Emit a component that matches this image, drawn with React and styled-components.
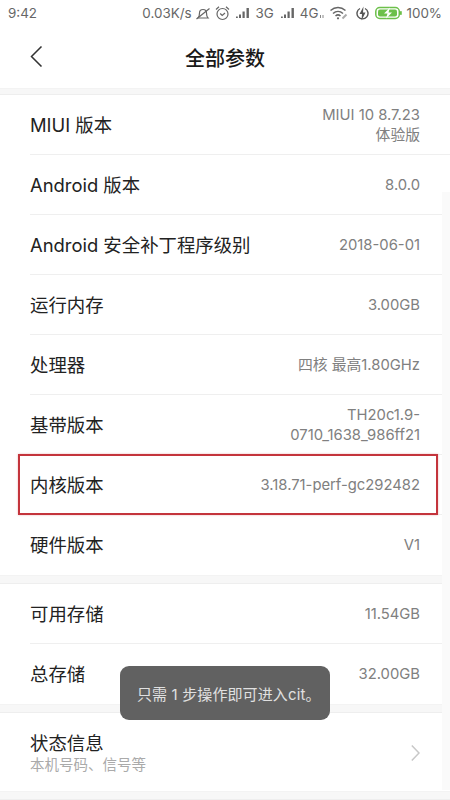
import React from "react";
import styled, { createGlobalStyle } from "styled-components";

const GlobalStyle = createGlobalStyle`
  html, body {
    margin: 0;
    padding: 0;
    background: #fff;
  }
  * {
    box-sizing: border-box;
  }
`;

const FONT = `"Inter", "Noto Sans CJK SC", sans-serif`;

const Page = styled.div`
  position: relative;
  width: 450px;
  height: 800px;
  overflow: hidden;
  background: #fff;
  font-family: ${FONT};
  display: flex;
  flex-direction: column;
`;

const StatusBar = styled.div`
  height: 26px;
  padding: 0 8px 0 8px;
  display: flex;
  align-items: center;
  justify-content: space-between;
  font-size: 13.4px;
  color: #666;
`;

const StatusRight = styled.div`
  display: flex;
  align-items: center;
`;

const Slot = styled.span`
  display: flex;
  align-items: center;
  margin-left: ${(p) => p.$ml || 0}px;
`;

const Header = styled.div`
  position: relative;
  height: 62px;
  display: flex;
  align-items: center;
  justify-content: center;
`;

const BackButton = styled.div`
  position: absolute;
  left: 30px;
  top: 20px;
  display: flex;
`;

const Title = styled.div`
  font-size: 20px;
  font-weight: 500;
  color: #1a1a1a;
`;

const Gap = styled.div`
  height: ${(p) => p.$h || 9}px;
  background: #f7f7f7;
  border-top: 1px solid #f3f3f3;
  border-bottom: 1px solid #eee;
  flex-shrink: 0;
`;

const Section = styled.div`
  display: flex;
  flex-direction: column;
`;

const Row = styled.div`
  height: ${(p) => p.$h || 60}px;
  margin-left: 30px;
  padding-right: 30px;
  padding-top: ${(p) => p.$pt || 0}px;
  display: flex;
  align-items: center;
  justify-content: space-between;
  border-bottom: ${(p) => (p.$last ? "none" : "1px solid #efefef")};
`;

const Label = styled.div`
  font-size: 18.4px;
  line-height: 24px;
  color: #222;
`;

const Value = styled.div`
  font-size: 14.8px;
  line-height: 20px;
  color: #808080;
  text-align: right;
`;

const SubLabel = styled.div`
  font-size: 14.5px;
  line-height: 20px;
  color: #aaa;
`;

const Highlight = styled.div`
  position: absolute;
  left: 18px;
  top: 454px;
  width: 420px;
  height: 61px;
  border: 2px solid #c4343c;
  box-shadow: 0 0 2px rgba(196, 52, 60, 0.35);
`;

const Scrollbar = styled.div`
  position: absolute;
  right: 0;
  top: 192px;
  width: 8px;
  height: 598px;
  background: #fafafa;
`;

const Toast = styled.div`
  position: absolute;
  left: 120px;
  top: 666px;
  width: 210px;
  height: 54px;
  padding-left: 17px;
  border-radius: 9px;
  background: #616161;
  color: #e0e0e0;
  font-size: 15px;
  letter-spacing: 0.12px;
  display: flex;
  align-items: center;
`;

const Chevron = ({ d, color, w, h, sw = 1.5 }) => (
  <svg width={w} height={h} viewBox={`0 0 ${w} ${h}`} fill="none">
    <path d={d} stroke={color} strokeWidth={sw} />
  </svg>
);

const Signal = () => (
  <svg width="14" height="12" viewBox="0 0 14 12">
    <rect x="0" y="9.500" width="1.800" height="1.500" fill="#666" />
    <rect x="3" y="7.500" width="2" height="3.500" fill="#666" />
    <rect x="6.500" y="4.500" width="2.200" height="6.500" fill="#666" />
    <rect x="10.500" y="1" width="2.400" height="10" fill="#666" />
  </svg>
);

const DataArrows = () => (
  <svg width="4" height="12" viewBox="0 0 4 12">
    <rect x="0" y="8" width="1" height="3" fill="#888" />
    <rect x="2.500" y="8" width="1" height="3" fill="#888" />
  </svg>
);

const MuteBell = () => (
  <svg width="14" height="15" viewBox="0 0 14 15" fill="none" stroke="#666" strokeWidth="1.200">
    <path d="M2 12c1.500-1.500 1.500-3 1.500-5s1.500-3.500 3.500-3.500S10.500 5 10.500 7s0 3.500 1.500 5z" />
    <path d="M0.500 13L13.500 2.500" />
  </svg>
);

const Alarm = () => (
  <svg width="15" height="16" viewBox="0 0 15 16" fill="none" stroke="#666" strokeWidth="1.200">
    <circle cx="7.500" cy="9" r="5.500" />
    <path d="M1 4.500L4 1.800M14 4.500L11 1.800M5.200 8.500l2 2 2.800-2.500" />
  </svg>
);

const Wifi = () => (
  <svg width="18" height="14" viewBox="0 0 18 14" fill="none" stroke="#666" strokeWidth="1.500">
    <path d="M0.500 4.500c4.500-4 10.500-4 15 0M3 7.500c3-2.800 7-2.800 10 0M5.500 10c1.700-1.500 3.300-1.500 5 0" />
    <circle cx="8" cy="12.300" r="1.100" fill="#666" stroke="none" />
    <path d="M12.500 12.500l4-4" stroke="#aaa" strokeWidth="2" />
  </svg>
);

const Charging = () => (
  <svg width="13" height="15" viewBox="0 0 13 15" fill="none">
    <path d="M4 2.500a5.500 5.500 0 1 0 5 0" stroke="#555" strokeWidth="1.400" />
    <path d="M7.500 0.500L3.500 8h2.500l-.5 6.500 4-8H7z" fill="#555" />
  </svg>
);

const Battery = () => (
  <svg width="27" height="14" viewBox="0 0 27 14">
    <rect x="0.800" y="1.500" width="23.500" height="11" rx="4" fill="none" stroke="#6cc04a" strokeWidth="1.500" />
    <rect x="3" y="3.500" width="19" height="7" rx="2" fill="#6cc04a" />
    <rect x="25" y="5" width="1.800" height="4" rx="0.800" fill="#6cc04a" />
    <path d="M15 1.500L9 7.500h3.500L11 12.500l6-6h-3.500z" fill="#fff" />
  </svg>
);

const App = () => {
  return (
    <Page>
      <GlobalStyle />
      <StatusBar>
        <span>9:42</span>
        <StatusRight>
          <span>0.03K/s</span>
          <Slot $ml={4}><MuteBell /></Slot>
          <Slot $ml={5}><Alarm /></Slot>
          <Slot $ml={6}><Signal /></Slot>
          <Slot $ml={6}>3G</Slot>
          <Slot $ml={7}><Signal /></Slot>
          <Slot $ml={5}>4G</Slot>
          <Slot $ml={1}><DataArrows /></Slot>
          <Slot $ml={6}><Wifi /></Slot>
          <Slot $ml={8}><Charging /></Slot>
          <Slot $ml={6}><Battery /></Slot>
          <Slot $ml={5}>100%</Slot>
        </StatusRight>
      </StatusBar>
      <Header>
        <BackButton>
          <Chevron d="M11.500 0.500L1.500 10.500l10 10" color="#333" w={13} h={21} />
        </BackButton>
        <Title>全部参数</Title>
      </Header>
      <Gap $h={7} />
      <Section>
        <Row>
          <Label>MIUI 版本</Label>
          <Value>MIUI 10 8.7.23<br />体验版</Value>
        </Row>
        <Row>
          <Label>Android 版本</Label>
          <Value>8.0.0</Value>
        </Row>
        <Row>
          <Label>Android 安全补丁程序级别</Label>
          <Value>2018-06-01</Value>
        </Row>
        <Row>
          <Label>运行内存</Label>
          <Value>3.00GB</Value>
        </Row>
        <Row>
          <Label>处理器</Label>
          <Value>四核 最高1.80GHz</Value>
        </Row>
        <Row>
          <Label>基带版本</Label>
          <Value>TH20c1.9-<br />0710_1638_986ff21</Value>
        </Row>
        <Row>
          <Label>内核版本</Label>
          <Value>3.18.71-perf-gc292482</Value>
        </Row>
        <Row $last>
          <Label>硬件版本</Label>
          <Value>V1</Value>
        </Row>
      </Section>
      <Gap />
      <Section>
        <Row>
          <Label>可用存储</Label>
          <Value>11.54GB</Value>
        </Row>
        <Row $last>
          <Label>总存储</Label>
          <Value>32.00GB</Value>
        </Row>
      </Section>
      <Gap />
      <Section>
        <Row $last $h={78} $pt={2}>
          <div>
            <Label>状态信息</Label>
            <SubLabel>本机号码、信号等</SubLabel>
          </div>
          <Chevron d="M0.800 0.500L8 8l-7.200 7.500" color="#c8c8c8" w={9} h={16} />
        </Row>
      </Section>
      <Gap />
      <Scrollbar />
      <Highlight />
      <Toast>只需 1 步操作即可进入cit。</Toast>
    </Page>
  );
};

export default App;
